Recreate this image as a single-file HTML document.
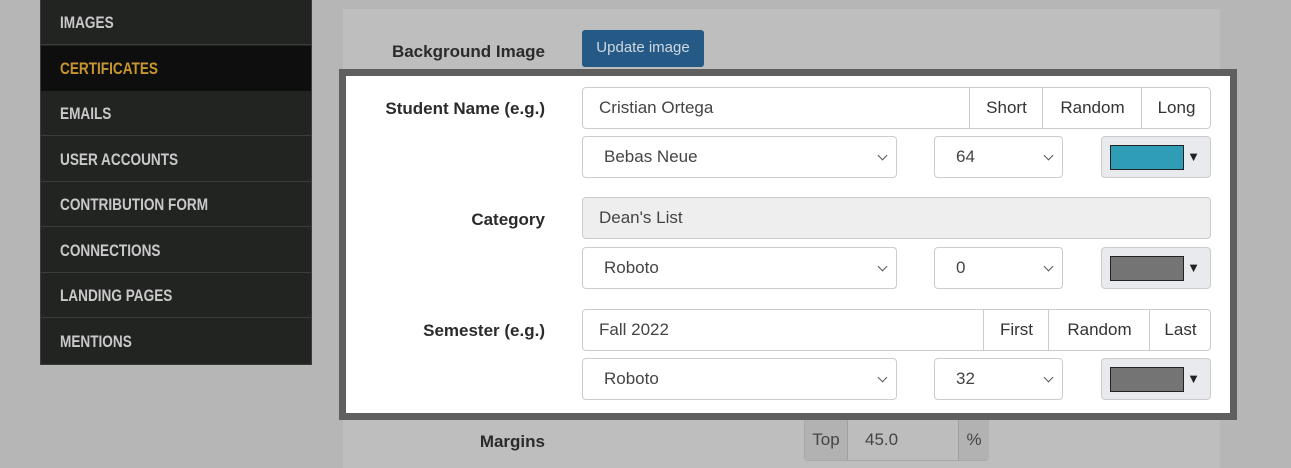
<!DOCTYPE html>
<html><head><meta charset="utf-8"><style>
*{box-sizing:border-box;margin:0;padding:0}
html,body{width:1291px;height:468px;overflow:hidden}
body{background:#b6b6b6;position:relative;font-family:"Liberation Sans",Arial,sans-serif;color:#333}
.a{position:absolute}
.side{left:40px;top:0;width:272px;height:365px;background:#222422;border:1px solid #3a3c3a;border-top:none}
.nav{position:absolute;left:0;width:270px;height:45px;border-bottom:1px solid #3a3c3a;font-weight:bold;font-size:17px;color:#c9c9c9;line-height:46px}
.nav span{position:absolute;left:19px;transform:scaleX(0.8);transform-origin:0 50%;white-space:nowrap}
.act{background:#0e0e0e;color:#c8962e}
.panel{left:343px;top:9px;width:877px;height:459px;background:#bebebe}
.box{left:339px;top:69px;width:898px;height:351px;border:7px solid #5f5f5f;background:#fff}
.lbl{font-weight:bold;font-size:17px;color:#2b2b2b;text-align:right;width:300px;left:245px}
.inp{border:1px solid #ccc;border-radius:4px;background:#fff;font-size:17px;color:#444;line-height:40px;padding-left:16px}
.btn{border-left:1px solid #ccc;font-size:17px;color:#333;text-align:center;line-height:40px;top:0;height:100%}
.sel{border:1px solid #ccc;border-radius:4px;background:#fff;font-size:17px;color:#444;line-height:40px;padding-left:21px}
.chev{position:absolute;right:10px;top:15px;width:7px;height:7px;border-right:1.5px solid #555;border-bottom:1.5px solid #555;transform:rotate(45deg)}
.col{border:1px solid #ccc;border-radius:4px;background:#e8eaed}
.sw{position:absolute;left:8px;top:8px;width:74px;height:25px;border:1px solid #222}
.tri{position:absolute;right:10px;top:12px;font-size:13px;color:#222}
</style></head><body>
<div class="a side">
<div class="nav" style="top:0"><span>IMAGES</span></div>
<div class="nav act" style="top:46px;border-bottom:none"><span>CERTIFICATES</span></div>
<div class="nav" style="top:91px"><span>EMAILS</span></div>
<div class="nav" style="top:137px"><span>USER ACCOUNTS</span></div>
<div class="nav" style="top:182px"><span>CONTRIBUTION FORM</span></div>
<div class="nav" style="top:228px"><span>CONNECTIONS</span></div>
<div class="nav" style="top:273px"><span>LANDING PAGES</span></div>
<div class="nav" style="top:319px;border-bottom:none"><span>MENTIONS</span></div>
</div>
<div class="a panel"></div>
<div class="a lbl" style="top:42px">Background Image</div>
<div class="a" style="left:582px;top:30px;width:122px;height:37px;background:#255a86;border-radius:3px;color:#cfd8e0;font-size:15px;text-align:center;line-height:36px">Update image</div>
<div class="a box"></div>

<div class="a lbl" style="top:99px">Student Name (e.g.)</div>
<div class="a inp" style="left:582px;top:87px;width:629px;height:42px">Cristian Ortega
<div class="a btn" style="left:386px;width:74px">Short</div>
<div class="a btn" style="left:459px;width:100px">Random</div>
<div class="a btn" style="left:558px;width:70px">Long</div>
</div>
<div class="a sel" style="left:582px;top:136px;width:315px;height:42px">Bebas Neue<div class="chev"></div></div>
<div class="a sel" style="left:934px;top:136px;width:129px;height:42px">64<div class="chev"></div></div>
<div class="a col" style="left:1101px;top:136px;width:110px;height:42px"><div class="sw" style="background:#2e9db5"></div><div class="tri">▼</div></div>

<div class="a lbl" style="top:210px">Category</div>
<div class="a inp" style="left:582px;top:197px;width:629px;height:42px;background:#eee">Dean's List</div>
<div class="a sel" style="left:582px;top:247px;width:315px;height:42px">Roboto<div class="chev"></div></div>
<div class="a sel" style="left:934px;top:247px;width:129px;height:42px">0<div class="chev"></div></div>
<div class="a col" style="left:1101px;top:247px;width:110px;height:42px"><div class="sw" style="background:#747474"></div><div class="tri">▼</div></div>

<div class="a lbl" style="top:321px">Semester (e.g.)</div>
<div class="a inp" style="left:582px;top:309px;width:629px;height:42px">Fall 2022
<div class="a btn" style="left:400px;width:66px">First</div>
<div class="a btn" style="left:465px;width:102px">Random</div>
<div class="a btn" style="left:566px;width:62px">Last</div>
</div>
<div class="a sel" style="left:582px;top:358px;width:315px;height:42px">Roboto<div class="chev"></div></div>
<div class="a sel" style="left:934px;top:358px;width:129px;height:42px">32<div class="chev"></div></div>
<div class="a col" style="left:1101px;top:358px;width:110px;height:42px"><div class="sw" style="background:#747474"></div><div class="tri">▼</div></div>

<div class="a lbl" style="top:432px">Margins</div>
<div class="a" style="left:804px;top:420px;width:185px;height:41px;border:1px solid #a8a8a8;border-top:none;border-radius:0 0 4px 4px;background:#bdbdbd;font-size:17px;color:#444;line-height:40px">
<div class="a" style="left:0;top:0;width:43px;height:40px;background:#b2b2b2;border-right:1px solid #a0a0a0;text-align:center">Top</div>
<div class="a" style="left:60px;top:0">45.0</div>
<div class="a" style="left:153px;top:0;width:31px;height:40px;background:#b2b2b2;border-left:1px solid #a0a0a0;text-align:center">%</div>
</div>
</body></html>
